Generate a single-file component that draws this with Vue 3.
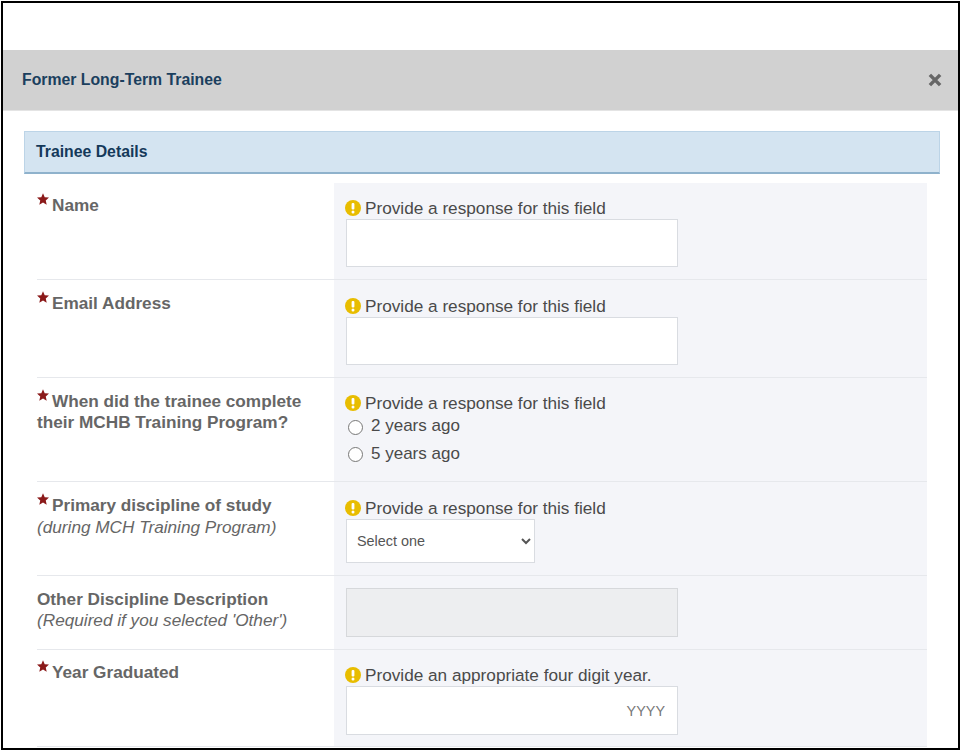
<script setup>
const warnPath = 'M8 0a8 8 0 1 0 0 16A8 8 0 0 0 8 0z'
</script>

<template>
  <div class="frame">
    <div class="modal-head">
      <h2 class="modal-title">Former Long-Term Trainee</h2>
      <svg class="close" viewBox="0 0 12 12" aria-label="Close">
        <path d="M1.6 1.6l8.8 8.8M10.4 1.6l-8.8 8.8" />
      </svg>
    </div>

    <div class="panel-head">Trainee Details</div>

    <div class="rows">
      <div class="row r1">
        <div class="label">
          <p class="title"><svg class="star" viewBox="0 0 24 24"><polygon points="12,0.5 15.4,8.4 24,9.2 17.5,14.9 19.4,23.4 12,19 4.6,23.4 6.5,14.9 0,9.2 8.6,8.4" /></svg>Name</p>
        </div>
        <div class="field">
          <p class="msg"><svg class="warn" viewBox="0 0 16 16"><path :d="warnPath" /><rect class="mark" x="6.6" y="3" width="2.8" height="6.6" rx="1" /><circle class="mark" cx="8" cy="11.9" r="1.5" /></svg>Provide a response for this field</p>
          <input class="text" type="text" />
        </div>
      </div>

      <div class="row r2">
        <div class="label">
          <p class="title"><svg class="star" viewBox="0 0 24 24"><polygon points="12,0.5 15.4,8.4 24,9.2 17.5,14.9 19.4,23.4 12,19 4.6,23.4 6.5,14.9 0,9.2 8.6,8.4" /></svg>Email Address</p>
        </div>
        <div class="field">
          <p class="msg"><svg class="warn" viewBox="0 0 16 16"><path :d="warnPath" /><rect class="mark" x="6.6" y="3" width="2.8" height="6.6" rx="1" /><circle class="mark" cx="8" cy="11.9" r="1.5" /></svg>Provide a response for this field</p>
          <input class="text" type="text" />
        </div>
      </div>

      <div class="row r3">
        <div class="label">
          <p class="title"><svg class="star" viewBox="0 0 24 24"><polygon points="12,0.5 15.4,8.4 24,9.2 17.5,14.9 19.4,23.4 12,19 4.6,23.4 6.5,14.9 0,9.2 8.6,8.4" /></svg>When did the trainee complete their MCHB Training Program?</p>
        </div>
        <div class="field">
          <p class="msg"><svg class="warn" viewBox="0 0 16 16"><path :d="warnPath" /><rect class="mark" x="6.6" y="3" width="2.8" height="6.6" rx="1" /><circle class="mark" cx="8" cy="11.9" r="1.5" /></svg>Provide a response for this field</p>
          <div class="radios">
            <label class="radio first"><input type="radio" name="completed" />2 years ago</label>
            <label class="radio"><input type="radio" name="completed" />5 years ago</label>
          </div>
        </div>
      </div>

      <div class="row r4">
        <div class="label">
          <p class="title"><svg class="star" viewBox="0 0 24 24"><polygon points="12,0.5 15.4,8.4 24,9.2 17.5,14.9 19.4,23.4 12,19 4.6,23.4 6.5,14.9 0,9.2 8.6,8.4" /></svg>Primary discipline of study</p>
          <p class="hint">(during MCH Training Program)</p>
        </div>
        <div class="field">
          <p class="msg"><svg class="warn" viewBox="0 0 16 16"><path :d="warnPath" /><rect class="mark" x="6.6" y="3" width="2.8" height="6.6" rx="1" /><circle class="mark" cx="8" cy="11.9" r="1.5" /></svg>Provide a response for this field</p>
          <select class="select"><option>Select one</option></select>
        </div>
      </div>

      <div class="row r5">
        <div class="label">
          <p class="title">Other Discipline Description</p>
          <p class="hint">(Required if you selected 'Other')</p>
        </div>
        <div class="field">
          <input class="text disabled" type="text" disabled />
        </div>
      </div>

      <div class="row r6">
        <div class="label">
          <p class="title"><svg class="star" viewBox="0 0 24 24"><polygon points="12,0.5 15.4,8.4 24,9.2 17.5,14.9 19.4,23.4 12,19 4.6,23.4 6.5,14.9 0,9.2 8.6,8.4" /></svg>Year Graduated</p>
        </div>
        <div class="field">
          <p class="msg"><svg class="warn" viewBox="0 0 16 16"><path :d="warnPath" /><rect class="mark" x="6.6" y="3" width="2.8" height="6.6" rx="1" /><circle class="mark" cx="8" cy="11.9" r="1.5" /></svg>Provide an appropriate four digit year.</p>
          <input class="text year" type="text" placeholder="YYYY" />
        </div>
      </div>
    </div>
  </div>
</template>

<style scoped>
.frame {
  box-sizing: border-box;
  width: 959px;
  height: 749px;
  margin: 1px 0 0 1px;
  padding-top: 47px;
  border: 2px solid #000;
  overflow: hidden;
  background: #fff;
  font-family: "Liberation Sans", Arial, sans-serif;
}
.modal-head {
  display: flex;
  align-items: center;
  justify-content: space-between;
  box-sizing: border-box;
  height: 61px;
  padding: 0 16px 1px 19px;
  background: #d1d1d1;
  border-bottom: 1px solid #e4e4e4;
}
.modal-title {
  margin: 0;
  font-size: 15.8px;
  font-weight: 700;
  color: #1b3f5e;
}
.close {
  width: 14px;
  height: 14px;
}
.close path {
  fill: none;
  stroke: #666;
  stroke-width: 3;
}
.panel-head {
  box-sizing: border-box;
  height: 43px;
  margin: 20px 18px 0 21px;
  padding: 11px 0 0 11px;
  background: #d4e4f1;
  border: 1px solid #bcd4e7;
  border-bottom: 2px solid #8fb2cc;
  font-size: 15.8px;
  line-height: 18px;
  font-weight: 700;
  color: #14395a;
}
.rows {
  width: 890px;
  margin: 9px 0 0 34px;
}
.row {
  display: grid;
  grid-template-columns: 297px 593px;
  border-bottom: 1px solid #e6e8ec;
}
.label {
  padding-top: 11px;
}
.r1 .label,
.r6 .label {
  padding-top: 10px;
}
.r5 .label {
  padding-top: 13px;
}
.r4 .hint {
  margin-top: 1px;
}
.title {
  margin: 0;
  width: 290px;
  font-size: 17.2px;
  line-height: 21px;
  font-weight: 700;
  color: #666;
}
.hint {
  margin: 0;
  font-size: 17.2px;
  line-height: 21px;
  font-style: italic;
  color: #666;
}
.star {
  width: 12px;
  height: 12px;
  margin-right: 3px;
  vertical-align: 6px;
}
.star polygon {
  fill: #8b1a1a;
}
.field {
  display: flex;
  flex-direction: column;
  align-items: flex-start;
  box-sizing: border-box;
  padding: 15px 0 11px 12px;
  background: #f4f5f9;
}
.r2 .field,
.r4 .field {
  padding-top: 16px;
}
.r5 .field {
  padding-top: 12px;
}
.r1 .field,
.r2 .field,
.r4 .field,
.r5 .field {
  padding-bottom: 12px;
}
.msg {
  display: flex;
  align-items: center;
  height: 20px;
  margin: 0 0 1px -1px;
  font-size: 17.2px;
  line-height: 21px;
  color: #4a4a4a;
}
.warn {
  width: 16px;
  height: 16px;
  margin: 0 4px 1px 0;
}
.warn path {
  fill: #e8bd00;
}
.warn .mark {
  fill: #fff;
}
.text {
  box-sizing: border-box;
  width: 332px;
  height: 48px;
  padding: 0 12px;
  border: 1px solid #d9dce1;
  border-radius: 0;
  background: #fff;
  outline: none;
}
.disabled {
  height: 49px;
  background: #edeef0;
  border-color: #d6d8db;
}
.year {
  height: 49px;
  font-family: inherit;
  font-size: 14.4px;
  text-align: right;
}
.year::placeholder {
  color: #777;
  opacity: 1;
}
.radios {
  margin: -2px 0 2px;
}
.radio {
  display: flex;
  align-items: center;
  height: 28px;
  font-size: 17px;
  color: #4a4a4a;
}
.radio input {
  width: 15px;
  height: 15px;
  margin: 0 8px 0 2px;
}
.radio.first input {
  margin-top: 2px;
}
.select {
  box-sizing: border-box;
  width: 189px;
  height: 44px;
  padding: 0 6px;
  border: 1px solid #d9dce1;
  border-radius: 0;
  background-color: #fff;
  font-family: inherit;
  font-size: 14.4px;
  color: #555;
  outline: none;
}
</style>
